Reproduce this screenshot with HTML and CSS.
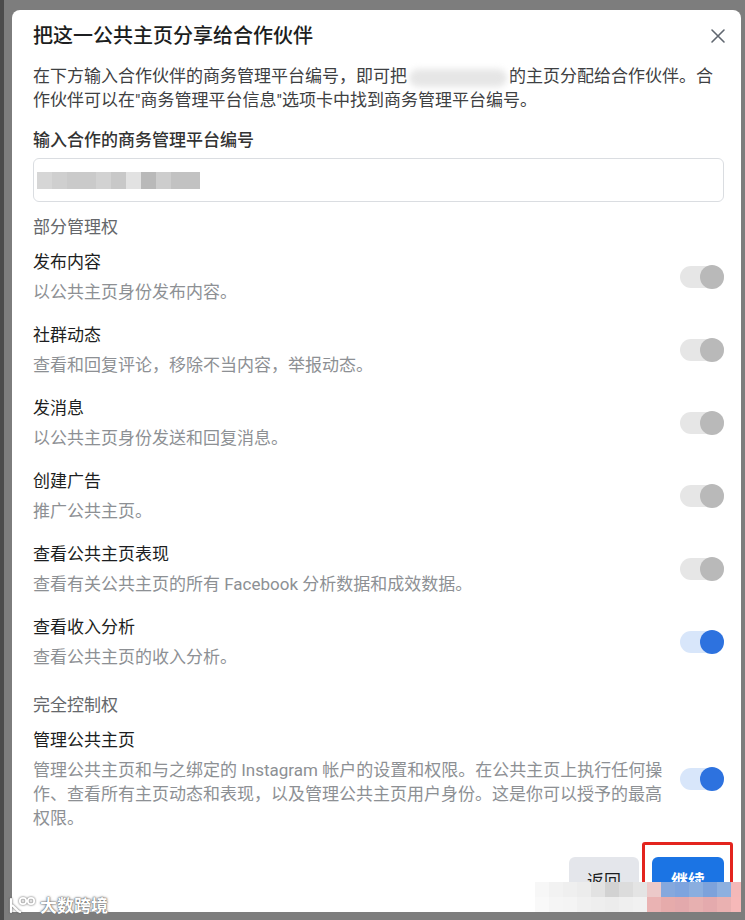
FILE: index.html
```html
<!DOCTYPE html>
<html lang="zh-CN">
<head>
    <meta charset="UTF-8">
    <meta name="viewport" content="width=device-width, initial-scale=1.0">
    <title>把这一公共主页分享给合作伙伴</title>
    <link rel="stylesheet" href="styles.css">
</head>
<body>
    <div class="dialog">
        <div class="dialog-header">
            <h1>把这一公共主页分享给合作伙伴</h1>
            <svg class="close" width="16" height="16" viewBox="0 0 16 16">
                <path d="M2 2 L14 14 M14 2 L2 14" stroke="#606770" stroke-width="1.6" stroke-linecap="round"/>
            </svg>
        </div>

        <p class="intro">在下方输入合作伙伴的商务管理平台编号，即可把<span class="redact"></span>的主页分配给合作伙伴。合作伙伴可以在"商务管理平台信息"选项卡中找到商务管理平台编号。</p>

        <label class="field-label">输入合作的商务管理平台编号</label>
        <div class="input">
            <div class="input-blur">
                <span style="background:#d6d6d6"></span><span style="background:#cfcfcf"></span><span style="background:#cacaca;width:29px"></span><span style="background:#d2d2d2"></span><span style="background:#c8c8c8"></span><span style="background:#e2e2e2"></span><span style="background:#b9b9b9"></span><span style="background:#cdcdcd"></span><span style="background:#c2c2c2;width:29px"></span>
            </div>
        </div>

        <div class="section-title">部分管理权</div>

        <div class="perm">
            <div class="perm-text">
                <div class="perm-name">发布内容</div>
                <div class="perm-desc">以公共主页身份发布内容。</div>
            </div>
            <div class="toggle"></div>
        </div>
        <div class="perm">
            <div class="perm-text">
                <div class="perm-name">社群动态</div>
                <div class="perm-desc">查看和回复评论，移除不当内容，举报动态。</div>
            </div>
            <div class="toggle"></div>
        </div>
        <div class="perm">
            <div class="perm-text">
                <div class="perm-name">发消息</div>
                <div class="perm-desc">以公共主页身份发送和回复消息。</div>
            </div>
            <div class="toggle"></div>
        </div>
        <div class="perm">
            <div class="perm-text">
                <div class="perm-name">创建广告</div>
                <div class="perm-desc">推广公共主页。</div>
            </div>
            <div class="toggle"></div>
        </div>
        <div class="perm">
            <div class="perm-text">
                <div class="perm-name">查看公共主页表现</div>
                <div class="perm-desc">查看有关公共主页的所有 Facebook 分析数据和成效数据。</div>
            </div>
            <div class="toggle"></div>
        </div>
        <div class="perm">
            <div class="perm-text">
                <div class="perm-name">查看收入分析</div>
                <div class="perm-desc">查看公共主页的收入分析。</div>
            </div>
            <div class="toggle on"></div>
        </div>

        <div class="section-title second">完全控制权</div>

        <div class="perm">
            <div class="perm-text">
                <div class="perm-name">管理公共主页</div>
                <div class="perm-desc">管理公共主页和与之绑定的 Instagram 帐户的设置和权限。在公共主页上执行任何操作、查看所有主页动态和表现，以及管理公共主页用户身份。这是你可以授予的最高权限。</div>
            </div>
            <div class="toggle on"></div>
        </div>

        <div class="actions">
            <button class="btn back">返回</button>
            <button class="btn next">继续</button>
        </div>

        <div class="mark-box"></div>

        <div class="mosaic">
            <span style="background:#f7f7f7"></span><span style="background:#f2f2f2"></span><span style="background:#efefef"></span><span style="background:#ececec"></span><span style="background:#e2e2e2"></span><span style="background:#d2d2d2"></span><span style="background:#dcdcdc"></span><span style="background:#e4e4e4"></span><span style="background:#ecc9c9"></span><span style="background:#85a8dd"></span><span style="background:#7ea4de"></span><span style="background:#8aaedf"></span><span style="background:#7da2db"></span><span style="background:#8eb0df"></span><span style="background:#f4b8b8"></span>
            <span style="background:#f9f9f9"></span><span style="background:#f5f5f5"></span><span style="background:#f4f4f4"></span><span style="background:#f0f0f0"></span><span style="background:#eeeeee"></span><span style="background:#ececec"></span><span style="background:#efefef"></span><span style="background:#f1f1f1"></span><span style="background:#eab3b3"></span><span style="background:#e6abab"></span><span style="background:#e3a9ac"></span><span style="background:#e7b0b0"></span><span style="background:#e4aaad"></span><span style="background:#eab1b1"></span><span style="background:#f6b8b8"></span>
        </div>
    </div>

    <div class="watermark">
        <svg width="28" height="20" viewBox="0 0 28 20">
            <path d="M3 4 V17 M3 10 C6 10 8 16 12 17" stroke="#fff" stroke-width="2.2" fill="none" stroke-linecap="round"/>
            <circle cx="15" cy="6" r="3.2" stroke="#fff" stroke-width="1.8" fill="none"/>
            <circle cx="23" cy="6" r="3.2" stroke="#fff" stroke-width="1.8" fill="none"/>
        </svg>
        <span>大数跨境</span>
    </div>
</body>
</html>
```

FILE: styles.css
```css
body {
    margin: 0;
    height: 920px;
    overflow: hidden;
    background-color: #7d7d7d;
    border-left: 4px solid #4b4b4b;
    box-sizing: border-box;
    padding: 10px 4px 0 8px;
    font-family: Roboto, "Noto Sans CJK SC", sans-serif;
    position: relative;
}

.dialog {
    position: relative;
    background: #fff;
    height: 902px;
    border-radius: 8px 8px 0 0;
    padding: 12px 17px 0 21px;
    box-sizing: border-box;
    overflow: hidden;
}

.dialog-header {
    display: flex;
    justify-content: space-between;
    align-items: center;
    height: 28px;
}

.dialog-header h1 {
    margin: 0;
    font-size: 20px;
    font-weight: 500;
    color: #1c1e21;
    line-height: 28px;
}

.close {
    margin-right: -2px;
}

.intro {
    margin: 14px 0 0;
    font-size: 17px;
    line-height: 24px;
    color: #3e4042;
}

.redact {
    display: inline-block;
    width: 98px;
    height: 18px;
    margin: 0 2px;
    vertical-align: middle;
    background: #e6e6e6;
    border-radius: 10px;
    filter: blur(3px);
}

.field-label {
    display: block;
    margin-top: 16px;
    font-size: 17px;
    line-height: 24px;
    font-weight: 500;
    color: #333;
}

.input {
    margin-top: 6px;
    height: 44px;
    border: 1px solid #dadde1;
    border-radius: 6px;
    box-sizing: border-box;
    display: flex;
    align-items: center;
    padding-left: 3px;
}

.input-blur {
    display: flex;
    filter: blur(0.6px);
}

.input-blur span {
    display: block;
    width: 15px;
    height: 17px;
}

.section-title {
    margin-top: 13px;
    font-size: 17px;
    line-height: 24px;
    color: #65676b;
}

.section-title.second {
    margin-top: 24px;
}

.perm {
    display: grid;
    grid-template-columns: 1fr 44px;
    column-gap: 11px;
    align-items: center;
    margin-top: 11px;
}

.perm + .perm {
    margin-top: 19px;
}

.perm-name {
    font-size: 17px;
    line-height: 24px;
    color: #1c1e21;
}

.perm-desc {
    margin-top: 6px;
    font-size: 17px;
    line-height: 24px;
    color: #8d9094;
}

.toggle {
    position: relative;
    width: 44px;
    height: 22px;
    border-radius: 11px;
    background: #e6e6e6;
}

.toggle::after {
    content: "";
    position: absolute;
    right: 0;
    top: -1px;
    width: 24px;
    height: 24px;
    border-radius: 50%;
    background: #b9b9b9;
}

.toggle.on {
    background: #d8e6fa;
}

.toggle.on::after {
    background: #2d72df;
}

.actions {
    display: flex;
    justify-content: flex-end;
    gap: 13px;
    margin-top: 27px;
}

.btn {
    height: 44px;
    border: none;
    border-radius: 6px;
    font-family: Roboto, "Noto Sans CJK SC", sans-serif;
    font-size: 17px;
    padding: 0;
}

.btn.back {
    width: 70px;
    background: #e4e6eb;
    color: #1c1e21;
}

.btn.next {
    width: 72px;
    background: #1b74e4;
    color: #fff;
    font-weight: bold;
}

.mark-box {
    position: absolute;
    left: 630px;
    top: 832px;
    width: 91px;
    height: 90px;
    border: 3px solid #e3241e;
    border-radius: 3px;
    box-sizing: border-box;
}

.mosaic {
    position: absolute;
    left: 523px;
    top: 872px;
    display: grid;
    grid-template-columns: repeat(15, 14px);
    grid-auto-rows: 15px;
    filter: blur(0.5px);
}

.watermark {
    position: absolute;
    left: 4px;
    bottom: 3px;
    display: flex;
    align-items: center;
    gap: 4px;
    color: #fff;
    font-size: 17px;
    font-weight: bold;
    font-family: "Noto Sans CJK SC", sans-serif;
    text-shadow: 0 0 1px #555, 0 0 2px #777, 0 0 3px #999;
}

.watermark svg {
    filter: drop-shadow(0 0 1px #555);
}
```
